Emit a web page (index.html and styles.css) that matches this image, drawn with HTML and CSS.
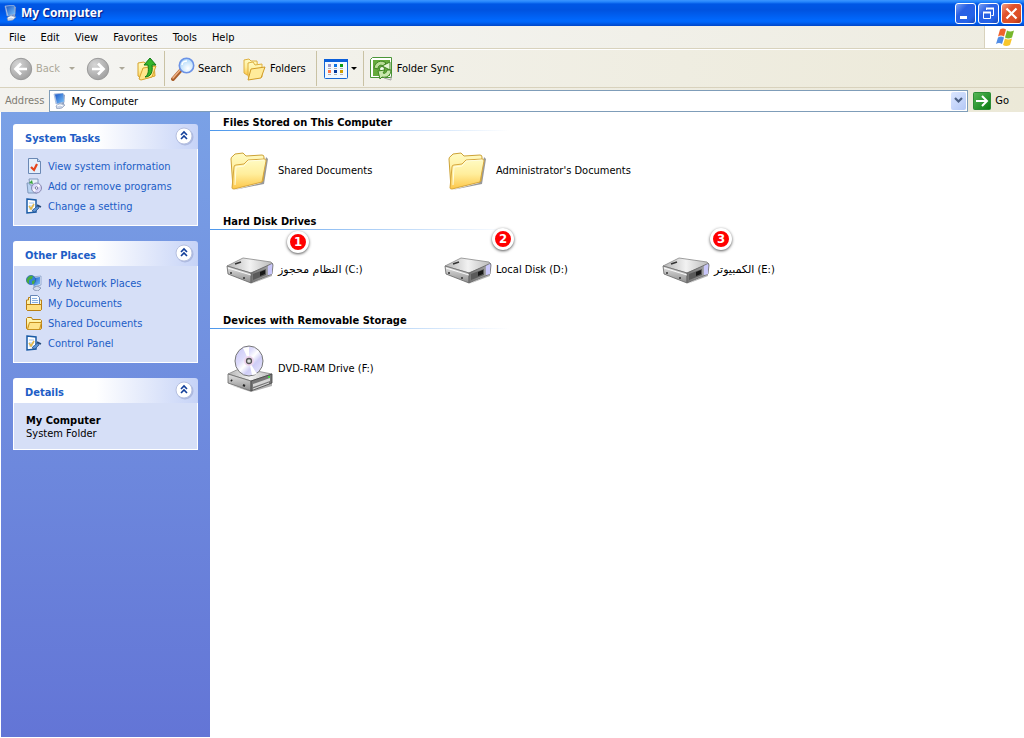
FILE: index.html
```
<!DOCTYPE html>
<html lang="en">
<head>
	<meta charset="utf-8">
	<meta name="viewport" content="width=device-width, initial-scale=1">
	<title>My Computer</title>
	<link rel="stylesheet" href="styles.css">
</head>
<body>
	<!-- shared icons -->
	<svg class="sprite" width="0" height="0" aria-hidden="true">
		<defs>
			<linearGradient id="g-folder" x1="0" y1="0" x2="0" y2="1">
				<stop offset="0" stop-color="#fffbc4"/><stop offset=".5" stop-color="#ffee9c"/><stop offset="1" stop-color="#fdc648"/>
			</linearGradient>
			<linearGradient id="g-screen" x1="0" y1="0" x2="1" y2="1">
				<stop offset="0" stop-color="#1b56c4"/><stop offset="1" stop-color="#7cc5fb"/>
			</linearGradient>
			<linearGradient id="g-metal" x1="0" y1="0" x2="1" y2="0">
				<stop offset="0" stop-color="#b4b4b4"/><stop offset=".5" stop-color="#f2f2f2"/><stop offset="1" stop-color="#b8b8b8"/>
			</linearGradient>
			<linearGradient id="g-front" x1="0" y1="0" x2="1" y2="0">
				<stop offset="0" stop-color="#747474"/><stop offset=".7" stop-color="#999"/><stop offset="1" stop-color="#c8c8fa"/>
			</linearGradient>
			<linearGradient id="g-side" x1="0" y1="0" x2="0" y2="1">
				<stop offset="0" stop-color="#e2e2e2"/><stop offset="1" stop-color="#8d8d8d"/>
			</linearGradient>
			<linearGradient id="g-disc" x1="0" y1="0" x2="1" y2="1">
				<stop offset="0" stop-color="#c6c4f4"/><stop offset=".35" stop-color="#dedcfb"/><stop offset=".5" stop-color="#fff"/><stop offset=".65" stop-color="#cfcdf6"/><stop offset="1" stop-color="#eef"/>
			</linearGradient>
			<radialGradient id="g-nav" cx=".35" cy=".3" r=".8">
				<stop offset="0" stop-color="#d6d6d6"/><stop offset="1" stop-color="#9c9c9c"/>
			</radialGradient>
			<radialGradient id="g-lens" cx=".6" cy=".7" r=".7">
				<stop offset="0" stop-color="#fff"/><stop offset="1" stop-color="#a8d6fb"/>
			</radialGradient>
			<linearGradient id="g-go" x1="0" y1="0" x2="1" y2="1">
				<stop offset="0" stop-color="#58b858"/><stop offset="1" stop-color="#087a10"/>
			</linearGradient>
		</defs>
		<symbol id="i-computer" viewBox="0 0 16 16">
			<path d="M11 1l2 1-1 9-2 1z" fill="#8d9fc2"/>
			<path d="M2 1l9-1 1 9-8 2z" fill="#b9cdf0" stroke="#8fa6cf" stroke-width=".6"/>
			<path d="M3 1.500l8-1 1 8-7 2z" fill="url(#g-screen)"/>
			<path d="M4 13l4-3 5 2-3 3-5 1z" fill="#c9d3e6" stroke="#7c8dac" stroke-width=".6"/>
			<path d="M5 13l3-1 3 1" stroke="#fff" fill="none"/>
		</symbol>
		<symbol id="i-back" viewBox="0 0 24 24">
			<circle cx="12" cy="12" r="10.7" fill="url(#g-nav)" stroke="#9a9a9a"/>
			<path d="M18 12H8M12 6.500L6.500 12 12 17.500" fill="none" stroke="#fff" stroke-width="2.700"/>
		</symbol>
		<symbol id="i-forward" viewBox="0 0 24 24">
			<circle cx="12" cy="12" r="10.7" fill="url(#g-nav)" stroke="#9a9a9a"/>
			<path d="M6 12h10M12 6.500L17.500 12 12 17.500" fill="none" stroke="#fff" stroke-width="2.700"/>
		</symbol>
		<symbol id="i-up" viewBox="0 0 24 24">
			<path d="M2 6l6-1 2 2 8 0 1 12-12 3-5-3z" fill="url(#g-folder)" stroke="#d6a32e"/>
			<path d="M7 11l13-2-4 11-11 3-2-1z" fill="#ffe68a" stroke="#d6a32e"/>
			<path d="M9 20c3-2 4-5 3-12h-4l6-7 6 7h-4c1 7-1 12-7 12z" fill="#35b52c" stroke="#127a16"/>
		</symbol>
		<symbol id="i-search" viewBox="0 0 24 24">
			<path d="M2 22l8-9" stroke="#a95f2c" stroke-width="4" stroke-linecap="round"/>
			<path d="M2 21l7-8" stroke="#f1b285" stroke-width="1.500" stroke-linecap="round"/>
			<circle cx="15.500" cy="8.500" r="7.200" fill="url(#g-lens)" stroke="#6c93e6" stroke-width="1.600"/>
			<path d="M11 8c0-3 3-4 5-4" stroke="#fff" stroke-width="1.500" fill="none"/>
		</symbol>
		<symbol id="i-folders" viewBox="0 0 24 24">
			<path d="M1 3l5-1 2 2 6 0 1 12-11 2-3-2z" fill="url(#g-folder)" stroke="#deb040"/>
			<path d="M5 6l5-1 2 3 7-1 0 13-12 2-2-3z" fill="url(#g-folder)" stroke="#deb040"/>
			<path d="M8 12l14-2-4 11-13 2z" fill="#ffeb9a" stroke="#d19c28"/>
		</symbol>
		<symbol id="i-views" viewBox="0 0 24 20">
			<rect x=".5" y=".5" width="23" height="19" rx="1" fill="#f3f8ff" stroke="#1566d6"/>
			<path d="M0 0h24v3H0z" fill="#0b5fda"/>
			<path d="M4 5h3v3H4z" fill="#9a98cc"/><path d="M10 5h3v3h-3z" fill="#0c72e4"/><path d="M16 5h3v3h-3z" fill="#0b9c16"/>
			<path d="M4 11h3v3H4z" fill="#ff7347"/><path d="M10 11h3v3h-3z" fill="#06389c"/><path d="M16 11h3v3h-3z" fill="#cf9c00"/>
			<path d="M4 9.500h3m3 0h3m3 0h3M4 15.500h3m3 0h3m3 0h3" stroke="#b0b0b0"/>
		</symbol>
		<symbol id="i-sync" viewBox="0 0 24 24">
			<path d="M2.500.5h19v20h-21v-18z" fill="#fff" stroke="#4a9638"/>
			<path d="M3 3h17v16H3z" fill="#65aa3c"/>
			<path d="M4 11c1-6 7-9 12-5l-3 3c-3-2-5 0-5 3z" fill="#b9dc98" stroke="#3e8520"/>
			<path d="M12 9l8-4v8z" fill="#e4f4d4" stroke="#3e8520"/>
			<circle cx="12" cy="12" r="2.500" fill="#f4fbef" stroke="#3e8520"/>
			<path d="M21 13c0 6-5 8-9 7l-2 2-2-8 7-1-2 3c2 1 3 0 4-3z" fill="#c9e7ae" stroke="#3e8520"/>
			<path d="M14 21l7 2v-4" stroke="#a4a4a4" fill="none"/>
		</symbol>
		<symbol id="i-go" viewBox="0 0 18 18">
			<rect x=".5" y=".5" width="17" height="17" rx="1" fill="url(#g-go)" stroke="#2c8c35"/>
			<path d="M3 9h11M9 4l5 5-5 5" fill="none" stroke="#fff" stroke-width="2"/>
		</symbol>
		<symbol id="i-flag" viewBox="0 0 20 18">
			<path d="M5 1.500q3-2 6 0l-2 7q-3-2-6 0z" fill="#f0622c"/>
			<path d="M12 2.500q3 2 7 0l-2 7q-4 2-7 0z" fill="#77b72c"/>
			<path d="M3 9.500q3-2 6 0l-2 6.500q-3-2-6 0z" fill="#4f8ce6"/>
			<path d="M10 10.500q3 2 7 0l-2 6.500q-4 2-7 0z" fill="#f8c62b"/>
		</symbol>
		<symbol id="i-chevrons" viewBox="0 0 20 20">
			<circle cx="11" cy="11" r="8.500" fill="#8d9cc9" opacity=".5"/>
			<circle cx="10" cy="10" r="8" fill="#fff" stroke="#b6c0e0"/>
			<path d="M7 9l3-3 3 3M7 13l3-3 3 3" fill="none" stroke="#123e99" stroke-width="1.600"/>
		</symbol>
		<symbol id="i-info" viewBox="0 0 16 16">
			<path d="M2.500.5h9l3 3v12h-12z" fill="#e4effc" stroke="#6a88b4"/>
			<path d="M11.500.5v3h3" fill="#c4daf5" stroke="#6a88b4"/>
			<path d="M5 9l3 3 3-6" fill="none" stroke="#e5451c" stroke-width="2.200"/>
		</symbol>
		<symbol id="i-programs" viewBox="0 0 16 16">
			<path d="M1 5h10v10l-9 0z" fill="#b9d3f2" stroke="#8098bb"/>
			<path d="M3 1h9v6H4z" fill="#e9f2fb" stroke="#8098bb"/>
			<path d="M3 5l3-3 1 4z" fill="#3ba33c"/>
			<circle cx="10.500" cy="10" r="5" fill="url(#g-disc)" stroke="#8888b0"/>
			<circle cx="10.500" cy="10" r="1.300" fill="#fff" stroke="#7777a0"/>
		</symbol>
		<symbol id="i-setting" viewBox="0 0 16 16">
			<path d="M1 1l9 1v12l-9 1z" fill="#fff" stroke="#1b5ca6" stroke-width="1.500"/>
			<path d="M3 5h5M3 8h5M3 11h5" stroke="#9fc5f0"/>
			<path d="M3 8l2 3 3-5" fill="none" stroke="#e3b84a" stroke-width="1.500"/>
			<path d="M6 13l4-4 3-1 0 2-4 4z" fill="#5c93d4" stroke="#234f8c" stroke-width=".7"/>
			<path d="M11 7l4 2" stroke="#274a78" stroke-width="1.500"/>
		</symbol>
		<symbol id="i-network" viewBox="0 0 16 16">
			<path d="M6 2l9-1 0 9-7 2z" fill="#e1eafa" stroke="#7d93bd" stroke-width=".7"/>
			<path d="M7 3l7-1 0 7-6 2z" fill="url(#g-screen)"/>
			<path d="M7 13l4-2 4 2-3 3-4-1z" fill="#d4dced" stroke="#7284a6" stroke-width=".7"/>
			<circle cx="5" cy="5" r="4.600" fill="#347fd9" stroke="#24599f" stroke-width=".6"/>
			<path d="M1 4c1-3 4-4 6-3L6 4 3 5v4C1 8 0 6 1 4zM6 6l3-1-1 4-2 0z" fill="#48ad3e"/>
		</symbol>
		<symbol id="i-docs" viewBox="0 0 16 16">
			<path d="M.5 5h2V2.500h3V5h10v9l-1 1.500h-13L.5 14z" fill="url(#g-folder)" stroke="#b97f14"/>
			<path d="M4.500.5h7l2 2v8h-9z" fill="#f6faff" stroke="#6586b8"/>
			<path d="M6 3.500h5M6 5.500h6M6 7.500h6" stroke="#86aee1"/>
			<path d="M.5 9.500h15v5l-1 1h-13l-1-1z" fill="#ffdf80" stroke="#b97f14"/>
		</symbol>
		<symbol id="i-smallfolder" viewBox="0 0 16 16">
			<path d="M.5 3.500l1-1h4l1 2h8l1 1v8l-1 1h-13l-1-1z" fill="url(#g-folder)" stroke="#b97f14"/>
			<path d="M3.500 7.500h12l-2 7h-12z" fill="#ffe48a" stroke="#c8921e"/>
		</symbol>
		<symbol id="i-folder" viewBox="0 0 48 48">
			<path d="M8 44l30-6 4-25-2-2-5 26z" fill="#000" opacity=".4"/>
			<path d="M5 13q0-2 2-3l2-2 8-1 3 3 16-1q2 0 2 2l-1 24-30 7z" fill="url(#g-folder)" stroke="#cda236"/>
			<path d="M6 42L8 21q0-2 2-2l8-1 4-4 17-1q1 0 1 2l-4 21-28 7q-2 0-2-1z" fill="url(#g-folder)" stroke="#d6a63c"/>
			<path d="M9 39l1-18 8-1 4-5 16-1" fill="none" stroke="#fffde0"/>
		</symbol>
		<symbol id="i-drive" viewBox="0 0 48 48">
			<path d="M4 30l21 9 21-10v2l-21 8z" fill="#000" opacity=".3"/>
			<path d="M1 21l16-8 28 4 2 2-22 9z" fill="url(#g-metal)" stroke="#888" stroke-width=".8"/>
			<path d="M1 21l24 7v10L2 29z" fill="url(#g-side)" stroke="#666" stroke-width=".8"/>
			<path d="M25 28l20-9q2-1 2 1l-1 9-21 9z" fill="url(#g-front)" stroke="#666" stroke-width=".8"/>
			<path d="M27 29l13-5v6l-13 5z" fill="#5a5a5a"/>
			<path d="M34 27l5-2v4l-5 2z" fill="#181818"/>
			<path d="M42 21l4-2v10l-4 1z" fill="#c9c7fa"/>
			<path d="M9 19l6-2" stroke="#333" stroke-width="1.500"/>
			<path d="M2 23l23 7" stroke="#fafafa"/>
			<path d="M5 27v2M18 32v2" stroke="#333" stroke-width="1.500"/>
		</symbol>
		<symbol id="i-dvd" viewBox="0 0 48 48">
			<path d="M4 41l22 6 20-8v3l-21 6z" fill="#000" opacity=".3"/>
			<path d="M2 30l13-6 31 6-21 7z" fill="url(#g-metal)" stroke="#888" stroke-width=".8"/>
			<path d="M2 30l23 7v10L2 39z" fill="url(#g-side)" stroke="#666" stroke-width=".8"/>
			<path d="M25 37l21-7v9l-21 8z" fill="#777" stroke="#444" stroke-width=".8"/>
			<path d="M27 40l17-6v3l-17 6z" fill="#d6d6d6"/>
			<path d="M27 45l16-6" stroke="#ddd"/>
			<path d="M42 33h2" stroke="#3fd33f" stroke-width="2"/>
			<path d="M5 36l1 1M17 41l2 1" stroke="#222" stroke-width="2"/>
			<ellipse cx="23" cy="17" rx="14" ry="15" fill="url(#g-disc)" stroke="#777" stroke-width="1"/>
			<path d="M23 17L17 4l6-1zM23 17l8 13-5 1z" fill="#fff"/>
			<circle cx="23" cy="17" r="5" fill="#eed5ee"/>
			<circle cx="23" cy="17" r="2.500" fill="#ddd" stroke="#555" stroke-width="1.300"/>
		</symbol>
	</svg>

	<header class="titlebar">
		<svg class="icon16"><use href="#i-computer"/></svg>
		<h1>My Computer</h1>
		<button type="button" class="winbtn" aria-label="Minimize"><svg viewBox="0 0 19 19"><path d="M4 12h7v3H4z" fill="#fff"/></svg></button>
		<button type="button" class="winbtn" aria-label="Restore"><svg viewBox="0 0 19 19"><path d="M7.500 6V4.500h7v7h-2" fill="none" stroke="#fff"/><path d="M7 4.500h8" stroke="#fff" stroke-width="2"/><path d="M4.500 8.500h7v6h-7z" fill="none" stroke="#fff"/><path d="M4 8.500h8" stroke="#fff" stroke-width="2"/></svg></button>
		<button type="button" class="winbtn close" aria-label="Close"><svg viewBox="0 0 19 19"><path d="M4.500 4.500l10 10M14.500 4.500l-10 10" stroke="#fff" stroke-width="2.200"/></svg></button>
	</header>

	<nav class="menubar">
		<button type="button">File</button>
		<button type="button">Edit</button>
		<button type="button">View</button>
		<button type="button">Favorites</button>
		<button type="button">Tools</button>
		<button type="button">Help</button>
		<span class="flag"><svg width="20" height="18"><use href="#i-flag"/></svg></span>
	</nav>

	<div class="toolbar">
		<div class="group nav">
			<button type="button" disabled><svg class="icon24"><use href="#i-back"/></svg>Back<i class="arrow"></i></button>
			<button type="button" disabled aria-label="Forward"><svg class="icon24"><use href="#i-forward"/></svg><i class="arrow"></i></button>
			<button type="button" aria-label="Up"><svg class="icon24"><use href="#i-up"/></svg></button>
		</div>
		<div class="group">
			<button type="button"><svg class="icon24"><use href="#i-search"/></svg>Search</button>
			<button type="button"><svg class="icon24"><use href="#i-folders"/></svg>Folders</button>
		</div>
		<div class="group views">
			<button type="button" aria-label="Views"><svg width="24" height="20"><use href="#i-views"/></svg><i class="arrow"></i></button>
		</div>
		<div class="group">
			<button type="button"><svg class="icon24"><use href="#i-sync"/></svg>Folder Sync</button>
		</div>
	</div>

	<form class="addressbar">
		<label for="address">Address</label>
		<div class="combo">
			<svg class="icon16"><use href="#i-computer"/></svg>
			<input type="text" id="address" value="My Computer">
			<button type="button" class="drop" aria-label="Show addresses"><svg width="9" height="7" viewBox="0 0 9 7"><path d="M1 1l3.500 3.500L8 1" fill="none" stroke="#4d6185" stroke-width="2.200"/></svg></button>
		</div>
		<button type="button" class="go"><svg width="18" height="18"><use href="#i-go"/></svg>Go</button>
	</form>

	<div class="window">
		<aside class="sidebar">
			<section class="panel">
				<header><h2>System Tasks</h2><button type="button" aria-label="Collapse System Tasks"><svg><use href="#i-chevrons"/></svg></button></header>
				<ul>
					<li><a href="#"><svg class="icon16"><use href="#i-info"/></svg>View system information</a></li>
					<li><a href="#"><svg class="icon16"><use href="#i-programs"/></svg>Add or remove programs</a></li>
					<li><a href="#"><svg class="icon16"><use href="#i-setting"/></svg>Change a setting</a></li>
				</ul>
			</section>
			<section class="panel">
				<header><h2>Other Places</h2><button type="button" aria-label="Collapse Other Places"><svg><use href="#i-chevrons"/></svg></button></header>
				<ul>
					<li><a href="#"><svg class="icon16"><use href="#i-network"/></svg>My Network Places</a></li>
					<li><a href="#"><svg class="icon16"><use href="#i-docs"/></svg>My Documents</a></li>
					<li><a href="#"><svg class="icon16"><use href="#i-smallfolder"/></svg>Shared Documents</a></li>
					<li><a href="#"><svg class="icon16"><use href="#i-setting"/></svg>Control Panel</a></li>
				</ul>
			</section>
			<section class="panel">
				<header><h2>Details</h2><button type="button" aria-label="Collapse Details"><svg><use href="#i-chevrons"/></svg></button></header>
				<p><strong>My Computer</strong><br>System Folder</p>
			</section>
		</aside>

		<main class="content">
			<section>
				<h2>Files Stored on This Computer</h2>
				<div class="items">
					<a class="item" href="#"><svg class="icon48"><use href="#i-folder"/></svg>Shared Documents</a>
					<a class="item" href="#"><svg class="icon48"><use href="#i-folder"/></svg>Administrator's Documents</a>
				</div>
			</section>
			<section>
				<h2>Hard Disk Drives</h2>
				<div class="items">
					<a class="item" href="#"><svg class="icon48"><use href="#i-drive"/></svg><span><bdi class="ar" lang="ar">النظام محجوز</bdi> (C:)</span><b class="badge first">1</b></a>
					<a class="item" href="#"><svg class="icon48"><use href="#i-drive"/></svg>Local Disk (D:)<b class="badge">2</b></a>
					<a class="item" href="#"><svg class="icon48"><use href="#i-drive"/></svg><span><bdi class="ar" lang="ar">الكمبيوتر</bdi> (E:)</span><b class="badge">3</b></a>
				</div>
			</section>
			<section>
				<h2>Devices with Removable Storage</h2>
				<div class="items">
					<a class="item" href="#"><svg class="icon48"><use href="#i-dvd"/></svg>DVD-RAM Drive (F:)</a>
				</div>
			</section>
		</main>
	</div>
</body>
</html>
```
FILE: styles.css
```
* {
	box-sizing: border-box;
}
body {
	margin: 0;
	min-height: 100vh;
	display: flex;
	flex-direction: column;
	background: #fff;
	color: #000;
	font-family: Tahoma, "DejaVu Sans Condensed", "DejaVu Sans", sans-serif;
	font-size: 11px;
	line-height: 13px;
}
h1, h2, p, ul {
	margin: 0;
	padding: 0;
}
ul {
	list-style: none;
}
h2 {
	font-size: 11px;
}
a {
	color: inherit;
	text-decoration: none;
}
button, input {
	font: inherit;
	color: inherit;
	background: none;
	border: 0;
	padding: 0;
	margin: 0;
}
svg {
	display: block;
	flex: none;
}
.sprite {
	position: absolute;
}
.icon16 {
	width: 16px;
	height: 16px;
}
.icon24 {
	width: 24px;
	height: 24px;
}
.icon48 {
	width: 48px;
	height: 48px;
}

/* title bar */
.titlebar {
	height: 26px;
	display: flex;
	align-items: center;
	gap: 2px;
	padding: 0 2px 0 3px;
	background: linear-gradient(#3c96ff 0, #2282fb 2px, #0057e5 4px, #0053e0 10px, #0068fd 20px, #0066fa 22px, #0046c8 26px);
	color: #fff;
}
.titlebar h1 {
	flex: 1;
	font-family: "Trebuchet MS", "Open Sans", sans-serif;
	font-size: 12px;
	line-height: 18px;
	text-shadow: 1px 1px 1px #0a1883;
}
.winbtn {
	width: 21px;
	height: 21px;
	border: 1px solid #fff;
	border-radius: 3px;
	background: linear-gradient(135deg, #7aa0f5, #2a60e4 35%, #2563e8 75%, #1a49b8);
}
.winbtn.close {
	background: linear-gradient(135deg, #f1a085, #e1512b 35%, #dc4f27 75%, #ad3311);
}

/* menu */
.menubar {
	height: 23px;
	display: flex;
	align-items: center;
	gap: 15px;
	padding-left: 9px;
	background: linear-gradient(90deg, #f6f7f8, #eeece0);
	border-bottom: 1px solid #d8d2bd;
}
.flag {
	align-self: stretch;
	width: 40px;
	margin-left: auto;
	padding: 2px 0 0 10px;
	background: #fff;
	border-left: 1px solid #d8d2bd;
}

/* toolbar */
.toolbar {
	height: 39px;
	display: flex;
	align-items: center;
	background: linear-gradient(90deg, #f5f5f3, #ece9d8);
	border-top: 1px solid #fff;
	border-bottom: 1px solid #d8d2bd;
}
.group {
	height: 35px;
	display: flex;
	align-items: center;
	gap: 11px;
	padding: 0 10px 0 6px;
	border-right: 1px solid #c9c2a4;
}
.group.nav {
	padding: 0 4px 0 9px;
}
.group.views {
	padding: 0 6px 0 7px;
}
.group:last-child {
	border: 0;
}
.toolbar button {
	display: flex;
	align-items: center;
	gap: 3px;
}
.toolbar button:disabled {
	color: #aca899;
}
.arrow {
	margin-left: 6px;
	border: 3px solid transparent;
	border-top-color: currentColor;
	border-bottom: 0;
}
.views .arrow {
	margin-left: 0;
}

/* address bar */
.addressbar {
	height: 24px;
	display: flex;
	align-items: center;
	gap: 5px;
	padding: 1px 15px 0 5px;
	background: linear-gradient(90deg, #f3f2ee, #ece9d8);
}
.addressbar label {
	color: #7f7c73;
}
.combo {
	flex: 1;
	height: 22px;
	display: flex;
	align-items: center;
	gap: 3px;
	padding: 0 1px 0 2px;
	background: #fff;
	border: 1px solid #7f9db9;
}
.combo input {
	flex: 1;
	min-width: 0;
	padding-top: 2px;
	outline: 0;
}
.drop {
	width: 15px;
	height: 18px;
	display: flex;
	align-items: center;
	justify-content: center;
	border-radius: 2px;
	background: linear-gradient(135deg, #dbe6ff, #b4c8f6);
}
.go {
	display: flex;
	align-items: center;
	gap: 4px;
}

.window {
	flex: 1;
	display: flex;
	padding: 0 0 1px 1px;
}

/* task pane */
.sidebar {
	flex: none;
	width: 209px;
	padding: 12px;
	display: flex;
	flex-direction: column;
	gap: 15px;
	background: linear-gradient(#7aa1e6, #6375d6);
}
.panel header {
	height: 25px;
	display: flex;
	align-items: flex-start;
	justify-content: space-between;
	padding: 2px 4px 0 12px;
	background: linear-gradient(90deg, #fff 45%, #c6d3f7);
	border-radius: 3px 3px 0 0;
	color: #215dc6;
}
.panel h2 {
	padding-top: 6px;
}
.panel header svg {
	width: 20px;
	height: 20px;
}
.panel ul, .panel p {
	border: 1px solid #fff;
	border-top: 0;
	background: #d6dff7;
}
.panel ul {
	padding: 7px 12px 9px;
}
.panel p {
	padding: 11px 12px 9px;
}
.panel a {
	height: 20px;
	display: flex;
	align-items: center;
	gap: 6px;
	color: #215dc6;
	white-space: nowrap;
}

/* file list */
.content {
	flex: 1;
	min-width: 0;
}
.content h2 {
	height: 19px;
	padding: 4px 0 0 13px;
	background: linear-gradient(90deg, #4c97ec, #fff) left bottom / 300px 1px no-repeat;
}
.items {
	display: grid;
	grid-template-columns: repeat(auto-fill, 218px);
	padding: 15px 16px 17px;
}
.item {
	position: relative;
	display: flex;
	align-items: center;
	gap: 4px;
	white-space: nowrap;
}
.ar {
	font-family: Tahoma, "DejaVu Sans", sans-serif;
}
/* numbered markers over the drives */
.badge {
	position: absolute;
	left: 48px;
	top: -17px;
	width: 22px;
	height: 22px;
	border: 3px solid #fff;
	border-radius: 50%;
	background: #f00;
	box-shadow: 0 1px 3px #555;
	color: #fff;
	font-size: 13px;
	line-height: 16px;
	text-align: center;
}
.badge.first {
	left: 61px;
	top: -14px;
}
```
